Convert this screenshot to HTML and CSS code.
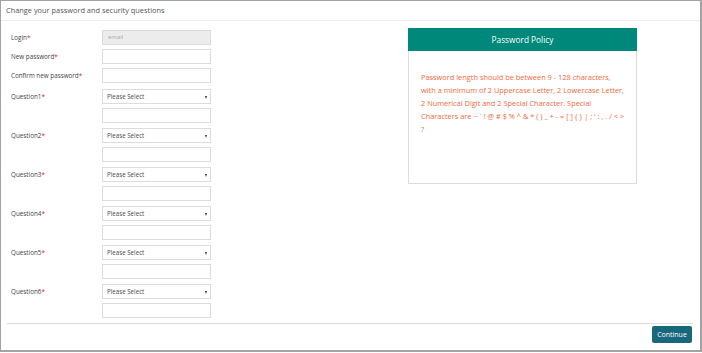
FILE: index.html
```html
<!DOCTYPE html>
<html>
<head>
<meta charset="utf-8">
<link rel="stylesheet" href="styles.css">
</head>
<body>
<div class="page">
  <div class="title">Change your password and security questions</div>
  <div class="content">
    <div class="form">
      <div class="row">
        <div class="label">Login<span class="req">*</span></div>
        <div class="field"><div class="input disabled"><span class="blur">email</span></div></div>
      </div>
      <div class="row">
        <div class="label">New password<span class="req">*</span></div>
        <div class="field"><div class="input"></div></div>
      </div>
      <div class="row">
        <div class="label">Confirm new password<span class="req">*</span></div>
        <div class="field"><div class="input"></div></div>
      </div>
      <div class="qrow first">
        <div class="label">Question1<span class="req">*</span></div>
        <div class="field"><div class="input select">Please Select<span class="caret"></span></div><div class="input"></div></div>
      </div>
      <div class="qrow">
        <div class="label">Question2<span class="req">*</span></div>
        <div class="field"><div class="input select">Please Select<span class="caret"></span></div><div class="input"></div></div>
      </div>
      <div class="qrow">
        <div class="label">Question3<span class="req">*</span></div>
        <div class="field"><div class="input select">Please Select<span class="caret"></span></div><div class="input"></div></div>
      </div>
      <div class="qrow">
        <div class="label">Question4<span class="req">*</span></div>
        <div class="field"><div class="input select">Please Select<span class="caret"></span></div><div class="input"></div></div>
      </div>
      <div class="qrow">
        <div class="label">Question5<span class="req">*</span></div>
        <div class="field"><div class="input select">Please Select<span class="caret"></span></div><div class="input"></div></div>
      </div>
      <div class="qrow">
        <div class="label">Question6<span class="req">*</span></div>
        <div class="field"><div class="input select">Please Select<span class="caret"></span></div><div class="input"></div></div>
      </div>
    </div>
    <div class="policy">
      <div class="policy-head">Password Policy</div>
      <div class="policy-body">Password length should be between 9 - 128 characters,<br>with a minimum of 2 Uppercase Letter, 2 Lowercase Letter,<br>2 Numerical Digit and 2 Special Character. Special<br>Characters are ~ ` ! @ # $ % ^ &amp; * ( ) _ + - = [ ] { } | ; ' : , . / &lt; &gt;<br>?</div>
    </div>
  </div>
  <div class="footer">
    <button class="btn">Continue</button>
  </div>
</div>
</body>
</html>
```

FILE: styles.css
```css
html, body {
  margin: 0;
  padding: 0;
  background: #fff;
}
body {
  font-family: "Open Sans", "Liberation Sans", sans-serif;
  color: #444;
}
.page {
  box-sizing: border-box;
  width: 702px;
  height: 352px;
  border: 1px solid #a3a3a3;
  border-right-width: 2px;
  border-bottom-width: 2px;
  display: flex;
  flex-direction: column;
}
.title {
  height: 19px;
  line-height: 19px;
  border-bottom: 1px solid #f0f0f0;
  padding-left: 5px;
  font-size: 7.4px;
  color: #555;
}
.content {
  display: flex;
  align-items: flex-start;
  padding-top: 7px;
}
.form {
  padding-left: 10px;
  padding-top: 1.5px;
  display: flex;
  flex-direction: column;
}
.row, .qrow {
  display: flex;
  align-items: flex-start;
}
.row + .row { margin-top: 4px; }
.qrow { margin-top: 5.3px; }
.qrow.first { margin-top: 6.8px; }
.label {
  width: 91px;
  font-size: 6.3px;
  line-height: 15px;
  color: #444;
}
.req { color: #e02020; }
.field {
  display: flex;
  flex-direction: column;
  gap: 3.7px;
}
.input {
  box-sizing: border-box;
  width: 109px;
  height: 15px;
  border: 1px solid #dcdcdc;
  background: #fff;
}
.input.disabled {
  background: #ececec;
  padding-left: 5px;
  font-size: 6px;
  line-height: 13px;
  color: #a8a8a8;
}
.blur { filter: blur(0.7px); }
.select {
  position: relative;
  padding-left: 4px;
  font-size: 6.2px;
  line-height: 13px;
  color: #4a4a4a;
}
.caret {
  position: absolute;
  right: 3px;
  top: 5.3px;
  width: 0;
  height: 0;
  border-left: 1.8px solid transparent;
  border-right: 1.8px solid transparent;
  border-top: 3px solid #333;
}
.policy {
  box-sizing: border-box;
  margin-left: 197px;
  width: 229px;
  height: 156px;
  border: 1px solid #dcdcdc;
}
.policy-head {
  margin: -1px -1px 0;
  height: 23px;
  line-height: 23px;
  background: #00897a;
  color: #fff;
  text-align: center;
  font-size: 8.3px;
}
.policy-body {
  padding: 20px 0 0 12px;
  font-size: 7.4px;
  line-height: 13px;
  color: #f4693c;
  white-space: nowrap;
}
.footer {
  margin: 5px 7px 0 6px;
  border-top: 1px solid #dedede;
  display: flex;
  justify-content: flex-end;
  padding-top: 2px;
}
.btn {
  width: 40px;
  height: 17.5px;
  padding: 0;
  border: none;
  border-radius: 2px;
  background: #17687d;
  color: #fff;
  font-family: "Open Sans", "Liberation Sans", sans-serif;
  font-size: 7px;
  margin-right: 1px;
}
```
